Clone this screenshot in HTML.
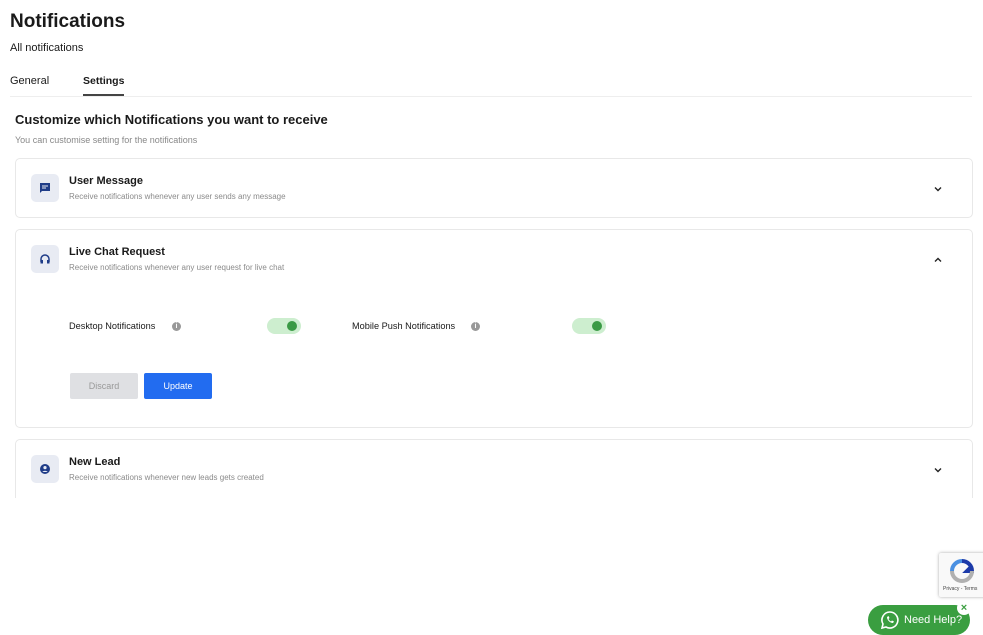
<!DOCTYPE html><html><head><style>
*{box-sizing:border-box;margin:0;padding:0}
body{width:983px;height:631px;overflow:hidden;background:#fff;font-family:"Liberation Sans",sans-serif;color:#1a1a1a;position:relative}
.a{position:absolute}
.card{position:absolute;left:15px;width:958px;border:1px solid #e8e8e8;border-radius:5px}
.ic{position:absolute;left:15px;top:15px;width:28px;height:28px;background:#e8ebf3;border-radius:5px;display:flex;align-items:center;justify-content:center}
.t{position:absolute;left:53px;top:16px;font-size:11px;font-weight:bold}
.s{position:absolute;left:53px;top:33px;font-size:8px;color:#8a8a8a}
.ch{position:absolute;right:30px;top:27px}
.tg{position:absolute;width:34px;height:16px;background:#cdeecf;border-radius:8px}
.tg:after{content:"";position:absolute;right:4px;top:3px;width:10px;height:10px;border-radius:50%;background:#3a9a45}
.inf{position:absolute;width:9px;height:9px;border-radius:50%;background:#999;color:#fff;font-size:7px;text-align:center;line-height:9px;font-weight:bold}
.lb{position:absolute;font-size:9.2px}
</style></head><body>
<div class="a" style="left:10px;top:11px;font-size:19px;font-weight:bold">Notifications</div>
<div class="a" style="left:10px;top:42px;font-size:11px">All notifications</div>
<div class="a" style="left:10px;top:75px;font-size:11px">General</div>
<div class="a" style="left:83px;top:75px;font-size:10.5px;font-weight:bold">Settings</div>
<div class="a" style="left:83px;top:94px;width:41px;height:2px;background:#444"></div>
<div class="a" style="left:10px;top:96px;width:962px;height:1px;background:#eee"></div>
<div class="a" style="left:15px;top:112px;font-size:13px;font-weight:bold">Customize which Notifications you want to receive</div>
<div class="a" style="left:15px;top:135px;font-size:9px;color:#888">You can customise setting for the notifications</div>

<div class="card" style="top:158px;height:60px">
<div class="ic"><svg width="12" height="12" viewBox="0 0 12 12"><path d="M1 1h10v8H3l-2 2z" fill="#1f3c88"/><path d="M3 4h6M3 6h4" stroke="#e8ebf3" stroke-width="1"/></svg></div>
<div class="t">User Message</div><div class="s">Receive notifications whenever any user sends any message</div>
<svg class="ch" width="8" height="6" viewBox="0 0 8 6"><path d="M1 1.5l3 3 3-3" stroke="#222" stroke-width="1.4" fill="none"/></svg></div>

<div class="card" style="top:229px;height:199px">
<div class="ic"><svg width="12" height="12" viewBox="0 0 12 12"><path d="M2 9V6a4 4 0 0 1 8 0v3" stroke="#1f3c88" stroke-width="1.5" fill="none"/><rect x="1.5" y="7" width="2.5" height="3.5" fill="#1f3c88"/><rect x="8" y="7" width="2.5" height="3.5" fill="#1f3c88"/></svg></div>
<div class="t">Live Chat Request</div><div class="s">Receive notifications whenever any user request for live chat</div>
<svg class="ch" width="8" height="6" viewBox="0 0 8 6"><path d="M1 4.5l3-3 3 3" stroke="#222" stroke-width="1.4" fill="none"/></svg>
<div class="lb" style="left:53px;top:91px">Desktop Notifications</div><div class="inf" style="left:156px;top:92px">i</div><div class="tg" style="left:251px;top:88px"></div>
<div class="lb" style="left:336px;top:91px">Mobile Push Notifications</div><div class="inf" style="left:455px;top:92px">i</div><div class="tg" style="left:556px;top:88px"></div>
<div class="a" style="left:54px;top:143px;width:68px;height:26px;background:#dfe0e3;border-radius:2px;color:#999;font-size:9px;text-align:center;line-height:26px">Discard</div>
<div class="a" style="left:128px;top:143px;width:68px;height:26px;background:#226cf0;border-radius:2px;color:#fff;font-size:9px;text-align:center;line-height:26px">Update</div>
</div>

<div class="card" style="top:439px;height:70px">
<div class="ic"><svg width="12" height="12" viewBox="0 0 12 12"><circle cx="6" cy="6" r="5" fill="#1f3c88"/><circle cx="6" cy="4.6" r="1.6" fill="#e8ebf3"/><path d="M3.3 9a3 2.3 0 0 1 5.4 0" fill="#e8ebf3"/></svg></div>
<div class="t">New Lead</div><div class="s">Receive notifications whenever new leads gets created</div>
<svg class="ch" width="8" height="6" viewBox="0 0 8 6"><path d="M1 1.5l3 3 3-3" stroke="#222" stroke-width="1.4" fill="none"/></svg></div>
<div class="a" style="left:0;top:498px;width:983px;height:133px;background:#fff"></div>

<div class="a" style="left:939px;top:553px;width:50px;height:44px;background:#f9f9f9;box-shadow:0 0 3px #aaa;border-radius:2px">
<svg class="a" style="left:10px;top:6px" width="26" height="24" viewBox="0 0 26 24"><path d="M13 2a10 10 0 0 1 10 10h-5l3-3" stroke="#1c3aa9" stroke-width="4" fill="none"/><path d="M3 12A10 10 0 0 1 13 2" stroke="#4a90e2" stroke-width="4" fill="none"/><path d="M23 12A10 10 0 0 1 3 12" stroke="#b0b0b0" stroke-width="4" fill="none"/></svg>
<div class="a" style="left:4px;top:33px;font-size:5px;color:#444;white-space:nowrap">Privacy - Terms</div></div>

<div class="a" style="left:868px;top:605px;width:102px;height:30px;background:#3a9e40;border-radius:15px;color:#fff;font-size:11px;line-height:30px;padding-left:36px">Need Help?</div>
<svg class="a" style="left:880px;top:610px" width="20" height="20" viewBox="0 0 20 20"><path d="M10 2a8 8 0 0 0-7 12l-1 4 4-1a8 8 0 1 0 4-15z" stroke="#fff" stroke-width="1.6" fill="none"/><path d="M7 7c0 3 3 6 6 6l1-1.5-2-1-1 1c-1-.5-2-1.5-2.5-2.5l1-1-1-2z" fill="#fff"/></svg>
<div class="a" style="left:957px;top:601px;width:14px;height:14px;border-radius:50%;background:#fff;color:#3a9e40;font-size:11px;font-weight:bold;text-align:center;line-height:14px">×</div>
</body></html>
